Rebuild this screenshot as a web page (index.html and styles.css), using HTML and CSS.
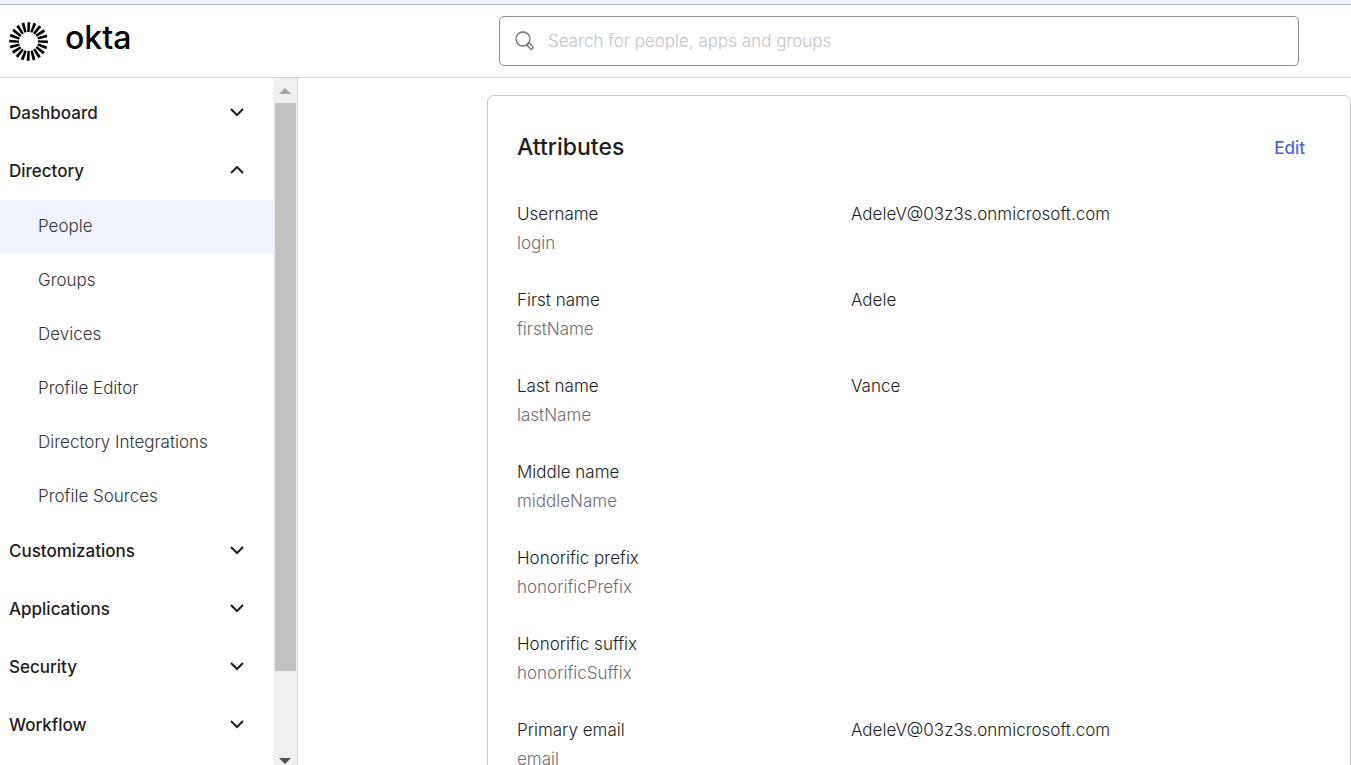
FILE: index.html
```html
<!DOCTYPE html>
<html lang="en">
<head>
<meta charset="utf-8">
<meta name="viewport" content="width=device-width, initial-scale=1">
<title>Okta Admin - People</title>
<link rel="stylesheet" href="styles.css">
</head>
<body>
<div class="notice"></div>
<header class="header">
  <a class="brand" href="#">
    <svg class="brand-mark" viewBox="-20 -20 40 40" aria-hidden="true">
      <defs><path id="ray" d="M-1.3 -9.8 L1.1 -9.8 L1.9 -19.8 L-1.1 -19.8 Z"/></defs>
      <g id="rays"></g>
    </svg>
    <span class="brand-name">okta</span>
  </a>
  <form class="search" role="search">
    <svg class="search-icon" viewBox="0 0 20 20" aria-hidden="true">
      <circle cx="8" cy="8" r="7"/>
      <path d="M12.8 12.8 L13.4 13.4"/>
      <rect x="-1.7" y="0" width="3.4" height="7" rx="1.4" transform="translate(12.6 12.6) rotate(-45)"/>
    </svg>
    <input class="search-input" type="search" aria-label="Search" placeholder="Search for people, apps and groups">
  </form>
</header>
<div class="body">
  <div class="sidebar">
    <nav class="nav" aria-label="Main">
      <button class="group" type="button">Dashboard<svg class="chevron" viewBox="0 0 14 10"><path d="M1 1 L7 7 L13 1"/></svg></button>
      <button class="group" type="button" aria-expanded="true">Directory<svg class="chevron" viewBox="0 0 14 10"><path d="M1 7 L7 1 L13 7"/></svg></button>
      <ul class="submenu">
        <li><a class="item item-active" href="#">People</a></li>
        <li><a class="item" href="#">Groups</a></li>
        <li><a class="item" href="#">Devices</a></li>
        <li><a class="item" href="#">Profile Editor</a></li>
        <li><a class="item" href="#">Directory Integrations</a></li>
        <li><a class="item" href="#">Profile Sources</a></li>
      </ul>
      <button class="group" type="button">Customizations<svg class="chevron" viewBox="0 0 14 10"><path d="M1 1 L7 7 L13 1"/></svg></button>
      <button class="group" type="button">Applications<svg class="chevron" viewBox="0 0 14 10"><path d="M1 1 L7 7 L13 1"/></svg></button>
      <button class="group" type="button">Security<svg class="chevron" viewBox="0 0 14 10"><path d="M1 1 L7 7 L13 1"/></svg></button>
      <button class="group" type="button">Workflow<svg class="chevron" viewBox="0 0 14 10"><path d="M1 1 L7 7 L13 1"/></svg></button>
    </nav>
    <div class="scrollbar" aria-hidden="true">
      <span class="arrow arrow-up"></span>
      <span class="thumb"></span>
      <span class="track"></span>
      <span class="arrow arrow-down"></span>
    </div>
  </div>
  <main class="main">
    <section class="card">
      <div class="card-head">
        <h1 class="title">Attributes</h1>
        <a class="edit" href="#">Edit</a>
      </div>
      <dl class="fields">
        <div class="field"><dt>Username<span class="key">login</span></dt><dd>AdeleV@03z3s.onmicrosoft.com</dd></div>
        <div class="field"><dt>First name<span class="key">firstName</span></dt><dd>Adele</dd></div>
        <div class="field"><dt>Last name<span class="key">lastName</span></dt><dd>Vance</dd></div>
        <div class="field"><dt>Middle name<span class="key">middleName</span></dt><dd></dd></div>
        <div class="field"><dt>Honorific prefix<span class="key">honorificPrefix</span></dt><dd></dd></div>
        <div class="field"><dt>Honorific suffix<span class="key">honorificSuffix</span></dt><dd></dd></div>
        <div class="field"><dt>Primary email<span class="key">email</span></dt><dd>AdeleV@03z3s.onmicrosoft.com</dd></div>
      </dl>
    </section>
  </main>
</div>
<script src="logo.js"></script>
</body>
</html>
```
FILE: styles.css
```css
* { box-sizing: border-box; }
body {
  margin: 0;
  height: 100vh;
  display: flex;
  flex-direction: column;
  overflow: hidden;
  background: #fff;
  color: #1d1d21;
  font-family: Inter, "Liberation Sans", sans-serif;
  font-size: 17px;
  font-weight: 350;
}
a { text-decoration: none; color: inherit; }
.notice { flex: none; height: 5px; background: #f0f3ff; border-bottom: 1px solid #a7b5ec; }
.header {
  flex: none;
  display: flex;
  align-items: center;
  padding: 11px 52px 11px 9px;
  border-bottom: 1px solid #d7d7dc;
}
.brand { flex: none; width: 490px; display: flex; align-items: center; gap: 17px; color: #000; }
.brand-mark { width: 39px; height: 39px; }
.brand-name { font-size: 32px; line-height: 36px; font-weight: 550; padding-bottom: 6px; }
.search {
  flex: 1;
  height: 50px;
  display: flex;
  align-items: center;
  gap: 13px;
  padding: 0 15px;
  border: 1px solid #8c8c96;
  border-radius: 5px;
}
.search-icon { flex: none; width: 20px; height: 20px; fill: none; stroke: #6e6e78; stroke-width: 1.3; }
.search-input { flex: 1; min-width: 0; border: 0; outline: 0; padding: 0; background: none; font: inherit; color: inherit; }
.search-input::placeholder { color: #c4c4c8; opacity: 1; }
.body { flex: 1; min-height: 0; display: flex; }
.sidebar { flex: none; width: 298px; display: flex; border-right: 1px solid #d7d7dc; }
.nav { flex: 1; padding-top: 6px; overflow: hidden; }
.group {
  width: 100%;
  height: 58px;
  display: flex;
  align-items: center;
  justify-content: space-between;
  padding: 0 29px 0 9px;
  border: 0;
  background: none;
  color: #1d1d21;
  font: inherit;
  font-weight: 550;
}
.chevron { width: 14px; height: 10px; fill: none; stroke: #1d1d21; stroke-width: 2; }
.submenu { list-style: none; margin: 0 0 -2px; padding: 0; }
.item { display: block; padding: 0 0 2px 38px; line-height: 52px; color: #34343a; }
.item-active { background: #f1f3ff; }
.scrollbar {
  flex: none;
  width: 24px;
  display: flex;
  flex-direction: column;
  align-items: center;
  background: #f0f0f0;
}
.arrow { flex: none; border: 6px solid transparent; border-top: 0; border-bottom: 0; }
.arrow-up { margin: 10px 0 9px; border-bottom: 6px solid #a3a3a3; }
.arrow-down { margin: 7px 0 1px; border-top: 6px solid #505050; }
.thumb { flex: 71; width: 21px; background: #c1c1c1; }
.track { flex: 10; }
.main { flex: 1; min-width: 0; padding: 17px 0 0 189px; }
.card { padding: 37px 45px 29px 29px; border: 1px solid #c8c8cc; border-radius: 7px; }
.card-head { display: flex; align-items: center; justify-content: space-between; }
.title { margin: 0; font-size: 23px; line-height: 29px; font-weight: 550; }
.edit { font-weight: 550; color: #4c64e1; }
.fields { margin: 38px 0 0; display: flex; flex-direction: column; gap: 28px; }
.field { display: grid; grid-template-columns: 334px 1fr; line-height: 29px; }
.field dt, .field dd { margin: 0; }
.key { display: block; color: #6e6e78; }
```
FILE: logo.js
```js
const rays = document.getElementById("rays");
const count = 20;
for (let i = 0; i < count; i++) {
  const ray = document.createElementNS("http://www.w3.org/2000/svg", "use");
  ray.setAttribute("href", "#ray");
  ray.setAttribute("transform", `rotate(${(i * 360) / count})`);
  rays.appendChild(ray);
}
```
